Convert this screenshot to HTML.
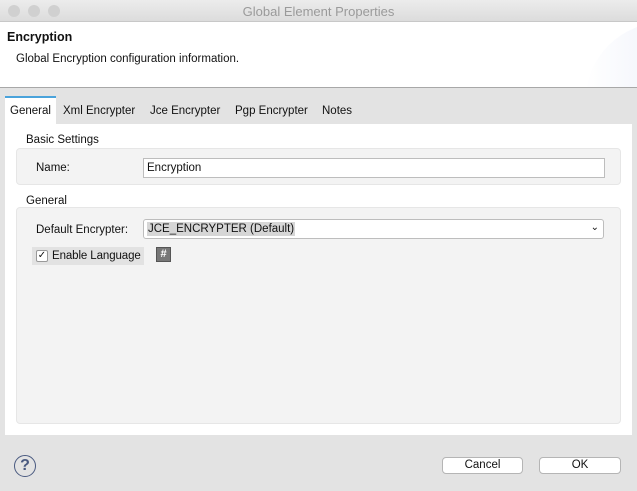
<!DOCTYPE html><html><head><style>
*{box-sizing:border-box}body{margin:0;width:637px;height:491px;background:#e3e3e3;font-family:"Liberation Sans",sans-serif;font-size:11.5px;color:#111;position:relative;overflow:hidden}
.a{position:absolute}
</style></head><body>
<div class="a" style="left:0;top:0;width:637px;height:22px;background:linear-gradient(#ececec,#dcdcdc);border-bottom:1px solid #c8c8c8"></div>
<div class="a" style="left:8px;top:5px;width:12px;height:12px;border-radius:50%;background:#d0d0d0"></div>
<div class="a" style="left:28px;top:5px;width:12px;height:12px;border-radius:50%;background:#d0d0d0"></div>
<div class="a" style="left:48px;top:5px;width:12px;height:12px;border-radius:50%;background:#d0d0d0"></div>
<div class="a" style="left:0;top:4px;width:637px;text-align:center;font-size:13px;color:#9a9a9a">Global Element Properties</div>
<div class="a" style="left:0;top:22px;width:637px;height:66px;background:#fff;border-bottom:1px solid #a8a8a8;overflow:hidden"><div class="a" style="left:585px;top:0px;width:160px;height:160px;border-radius:50%;background:linear-gradient(90deg,#fff,#e3e8f7)"></div></div>
<div class="a" style="left:7px;top:30px;font-weight:bold;font-size:12.5px">Encryption</div>
<div class="a" style="left:16px;top:53px">Global Encryption configuration information.</div>
<div class="a" style="left:5px;top:96px;width:51px;height:30px;background:#fff;border-top:2px solid #4aa3db"></div>
<div class="a" style="left:10px;top:105px">General</div>
<div class="a" style="left:63px;top:105px">Xml Encrypter</div>
<div class="a" style="left:150px;top:105px">Jce Encrypter</div>
<div class="a" style="left:235px;top:105px">Pgp Encrypter</div>
<div class="a" style="left:322px;top:105px">Notes</div>
<div class="a" style="left:5px;top:124px;width:627px;height:311px;background:#fff"></div>
<div class="a" style="left:26px;top:134px">Basic Settings</div>
<div class="a" style="left:16px;top:148px;width:605px;height:37px;background:#f3f3f3;border:1px solid #e6e6e6;border-radius:4px"></div>
<div class="a" style="left:36px;top:162px">Name:</div>
<div class="a" style="left:143px;top:158px;width:462px;height:20px;background:#fff;border:1px solid #bdbdbd;padding:3px 3px">Encryption</div>
<div class="a" style="left:26px;top:195px">General</div>
<div class="a" style="left:16px;top:207px;width:605px;height:217px;background:#f3f3f3;border:1px solid #e6e6e6;border-radius:4px"></div>
<div class="a" style="left:36px;top:224px">Default Encrypter:</div>
<div class="a" style="left:143px;top:219px;width:461px;height:20px;background:#fff;border:1px solid #bdbdbd;border-radius:3px"><span style="position:absolute;left:3px;top:2px;background:#d6d6d6;padding:1px 1px">JCE_ENCRYPTER (Default)</span><span style="position:absolute;right:4px;top:2px;font-size:10px">&#8964;</span></div>
<div class="a" style="left:32px;top:247px;width:112px;height:18px;background:#e2e2e2"></div>
<div class="a" style="left:36px;top:250px;width:12px;height:12px;background:#fff;border:1px solid #999;border-radius:2px;font-size:10px;line-height:10px;text-align:center">✓</div>
<div class="a" style="left:52px;top:250px;letter-spacing:-0.1px">Enable Language</div>
<div class="a" style="left:156px;top:247px;width:15px;height:15px;background:#777;border:1px solid #555;color:#fff;font-size:11px;font-weight:bold;text-align:center;line-height:13px">#</div>
<div class="a" style="left:14px;top:455px;width:22px;height:22px;border:1.5px solid #4a5a80;border-radius:50%;text-align:center;font-size:16px;font-weight:bold;color:#4a5a80;line-height:19px">?</div>
<div class="a" style="left:442px;top:457px;width:81px;height:17px;background:#fff;border:1px solid #b5b5b5;border-radius:4px;text-align:center;line-height:15px">Cancel</div>
<div class="a" style="left:539px;top:457px;width:82px;height:17px;background:#fff;border:1px solid #b5b5b5;border-radius:4px;text-align:center;line-height:15px">OK</div>
</body></html>
